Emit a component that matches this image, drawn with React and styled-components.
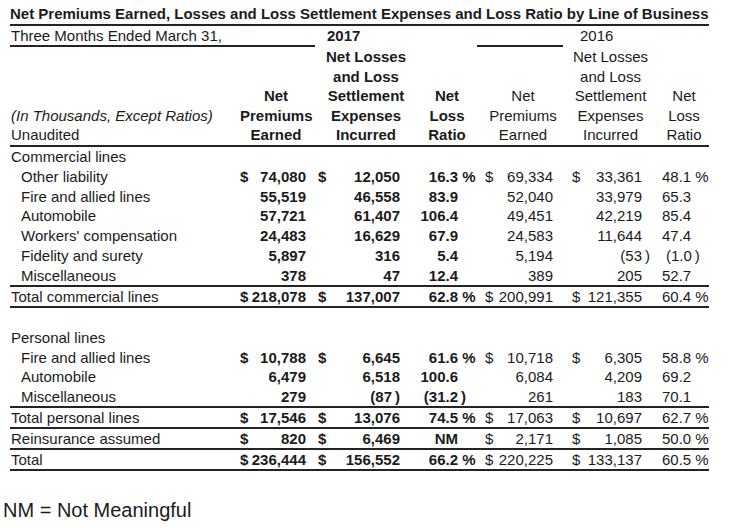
import React from 'react';
import styled, { createGlobalStyle } from 'styled-components';

const COLS = '226px 76px 94px 70px 90px 89px 54px';
const RULE = '2px solid #242424';

const GlobalStyle = createGlobalStyle`
  body {
    margin: 0;
    background: #fff;
    color: #1b1b1b;
    font-family: "Liberation Sans", Arial, sans-serif;
  }
`;

const Page = styled.div`
  width: 733px;
  height: 528px;
  overflow: hidden;
  padding-top: 4px;
  box-sizing: border-box;
`;
const Report = styled.div`
  margin-left: 10px;
  width: 699px;
  font-size: 15px;
`;
const Title = styled.div`
  font-weight: bold;
  line-height: 20px;
  white-space: nowrap;
  border-bottom: ${RULE};
`;
const PeriodRow = styled.div`
  display: flex;
  align-items: flex-start;
  line-height: 19px;
`;
const PeriodLabel = styled.div`
  width: 304px;
  padding-left: 1px;
  border-bottom: ${RULE};
`;
const Year = styled.div`
  width: ${p => p.$width}px;
  margin-left: ${p => p.$offset}px;
  font-weight: ${p => (p.$bold ? 'bold' : 'normal')};
`;
const YearRule = styled.div`
  width: 86px;
  height: 19px;
  border-bottom: ${RULE};
`;
const HeadGrid = styled.div`
  display: grid;
  grid-template-columns: ${COLS};
  align-items: end;
  line-height: 19.6px;
  border-bottom: ${RULE};
`;
const HeadCell = styled.div`
  text-align: center;
  white-space: nowrap;
  font-weight: ${p => (p.$bold ? 'bold' : 'normal')};
  padding-left: ${p => p.$shift || 0}px;
`;
const HeadLabel = styled.div`
  padding-left: 1px;
  white-space: nowrap;
`;
const HeadNote = styled.div`
  font-style: italic;
`;
const Row = styled.div`
  display: grid;
  grid-template-columns: ${COLS};
  line-height: ${p => (p.$ruled ? '19px' : '19.8px')};
  border-bottom: ${p => (p.$ruled ? RULE : '0')};
  white-space: nowrap;
`;
const Spacer = styled.div`
  height: 20px;
`;
const Label = styled.div`
  padding-left: ${p => (p.$indent ? 11 : 1)}px;
`;
const Money = styled.div`
  display: flex;
  justify-content: space-between;
  padding: 0 ${p => p.$right}px 0 ${p => p.$left}px;
  font-weight: ${p => (p.$bold ? 'bold' : 'normal')};
`;
const RatioRight = styled.div`
  text-align: right;
  padding-right: 18px;
  font-weight: bold;
`;
const RatioLeft = styled.div`
  padding-left: ${p => (p.$negative ? 11 : 7)}px;
`;
const Hang = styled.span`
  display: inline-block;
  width: 0;
  white-space: pre;
  text-align: left;
`;
const Footnote = styled.div`
  margin-top: 27px;
  padding-left: 3px;
  font-size: 20px;
  line-height: 24px;
`;

const MONEY_COLS = {
  a: { left: 4, right: 6, bold: true },
  b: { left: 6, right: 6, bold: true },
  d: { left: 9, right: 13, bold: false },
  e: { left: 6, right: 13, bold: false },
};

const commercial = [
  { label: 'Other liability', dollar: true, a: '74,080', b: '12,050', c: '16.3', d: '69,334', e: '33,361', f: '48.1' },
  { label: 'Fire and allied lines', a: '55,519', b: '46,558', c: '83.9', d: '52,040', e: '33,979', f: '65.3' },
  { label: 'Automobile', a: '57,721', b: '61,407', c: '106.4', d: '49,451', e: '42,219', f: '85.4' },
  { label: "Workers' compensation", a: '24,483', b: '16,629', c: '67.9', d: '24,583', e: '11,644', f: '47.4' },
  { label: 'Fidelity and surety', a: '5,897', b: '316', c: '5.4', d: '5,194', e: '(53)', f: '(1.0\u2009)' },
  { label: 'Miscellaneous', ruled: true, a: '378', b: '47', c: '12.4', d: '389', e: '205', f: '52.7' },
];

const personal = [
  { label: 'Fire and allied lines', dollar: true, a: '10,788', b: '6,645', c: '61.6', d: '10,718', e: '6,305', f: '58.8' },
  { label: 'Automobile', a: '6,479', b: '6,518', c: '100.6', d: '6,084', e: '4,209', f: '69.2' },
  { label: 'Miscellaneous', ruled: true, a: '279', b: '(87\u2009)', c: '(31.2)', d: '261', e: '183', f: '70.1' },
];

const totalCommercial = { label: 'Total commercial lines', dollar: true, a: '218,078', b: '137,007', c: '62.8', d: '200,991', e: '121,355', f: '60.4' };
const totals = [
  { label: 'Total personal lines', dollar: true, a: '17,546', b: '13,076', c: '74.5', d: '17,063', e: '10,697', f: '62.7' },
  { label: 'Reinsurance assumed', dollar: true, a: '820', b: '6,469', c: 'NM', d: '2,171', e: '1,085', f: '50.0' },
  { label: 'Total', dollar: true, a: '236,444', b: '156,552', c: '66.2', d: '220,225', e: '133,137', f: '60.5' },
];

// trailing ")" hangs outside the column, the way the printed report does it
function splitParen(value) {
  if (value.startsWith('(') && value.endsWith(')')) {
    return [value.slice(0, -1), '\u2009)'];
  }
  return [value, ''];
}

function MoneyCell({ col, value, dollar }) {
  const cfg = MONEY_COLS[col];
  const [body, tail] = col === 'e' ? splitParen(value) : [value, ''];
  return (
    <Money $left={cfg.left} $right={cfg.right} $bold={cfg.bold}>
      <span>{dollar ? '$' : ''}</span>
      <span>
        {body}
        {tail && <Hang>{tail}</Hang>}
      </span>
    </Money>
  );
}

function DataRow({ row, indent, ruled }) {
  const [ratio, close] = splitParen(row.c);
  const pct = row.dollar && row.c !== 'NM';
  return (
    <Row $ruled={ruled || row.ruled}>
      <Label $indent={indent}>{row.label}</Label>
      <MoneyCell col="a" value={row.a} dollar={row.dollar} />
      <MoneyCell col="b" value={row.b} dollar={row.dollar} />
      <RatioRight>
        {ratio}
        {close && <Hang>{close}</Hang>}
        {pct && <Hang>{'\u00a0%'}</Hang>}
      </RatioRight>
      <MoneyCell col="d" value={row.d} dollar={row.dollar} />
      <MoneyCell col="e" value={row.e} dollar={row.dollar} />
      <RatioLeft $negative={row.f.startsWith('(')}>
        {row.f}
        {row.dollar ? '\u00a0%' : ''}
      </RatioLeft>
    </Row>
  );
}

const headers = [
  { lines: ['Net', 'Premiums', 'Earned'], bold: true, shift: 4 },
  { lines: ['Net Losses', 'and Loss', 'Settlement', 'Expenses', 'Incurred'], bold: true, shift: 14 },
  { lines: ['Net', 'Loss', 'Ratio'], bold: true, shift: 12 },
  { lines: ['Net', 'Premiums', 'Earned'], shift: 4 },
  { lines: ['Net Losses', 'and Loss', 'Settlement', 'Expenses', 'Incurred'], shift: 0 },
  { lines: ['Net', 'Loss', 'Ratio'], shift: 4 },
];

export default function App() {
  return (
    <Page>
      <GlobalStyle />
      <Report>
        <Title>Net Premiums Earned, Losses and Loss Settlement Expenses and Loss Ratio by Line of Business</Title>
        <PeriodRow>
          <PeriodLabel>Three Months Ended March 31,</PeriodLabel>
          <Year $bold $offset={12} $width={150}>2017</Year>
          <YearRule />
          <Year $offset={17} $width={60}>2016</Year>
        </PeriodRow>
        <HeadGrid>
          <HeadLabel>
            <HeadNote>(In Thousands, Except Ratios)</HeadNote>
            <div>Unaudited</div>
          </HeadLabel>
          {headers.map((h, i) => (
            <HeadCell key={i} $bold={h.bold} $shift={h.shift}>
              {h.lines.map(line => (
                <div key={line}>{line}</div>
              ))}
            </HeadCell>
          ))}
        </HeadGrid>

        <Row>
          <Label>Commercial lines</Label>
        </Row>
        {commercial.map(row => (
          <DataRow key={row.label} row={row} indent />
        ))}
        <DataRow row={totalCommercial} ruled />
        <Spacer />

        <Row>
          <Label>Personal lines</Label>
        </Row>
        {personal.map(row => (
          <DataRow key={row.label} row={row} indent />
        ))}
        {totals.map(row => (
          <DataRow key={row.label} row={row} ruled />
        ))}
      </Report>
      <Footnote>NM = Not Meaningful</Footnote>
    </Page>
  );
}
